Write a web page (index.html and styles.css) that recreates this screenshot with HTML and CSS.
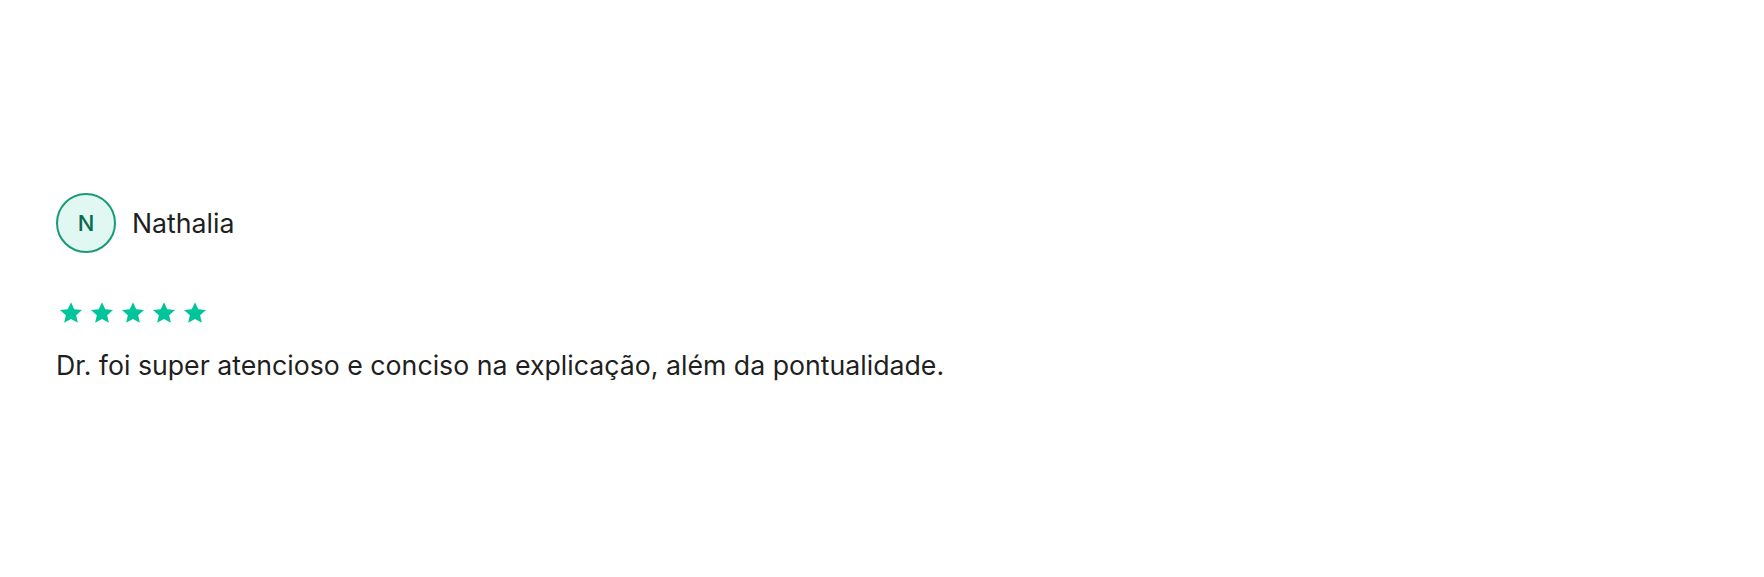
FILE: index.html
```html
<!DOCTYPE html>
<html lang="pt-BR">
<head>
<meta charset="UTF-8">
<meta name="viewport" content="width=device-width, initial-scale=1.0">
<title>Avaliação</title>
<link rel="stylesheet" href="styles.css">
</head>
<body>
<div class="review">
    <div class="review-header">
        <div class="avatar">N</div>
        <span class="name">Nathalia</span>
    </div>
    <div class="stars">
        <svg class="star" viewBox="2.2 2.5 19.6 18.4"><path d="M12 2.5l2.9 6.3 6.9.7-5.2 4.6 1.5 6.8L12 17.4l-6.1 3.5 1.5-6.8-5.2-4.6 6.9-.7z"/></svg>
        <svg class="star" viewBox="2.2 2.5 19.6 18.4"><path d="M12 2.5l2.9 6.3 6.9.7-5.2 4.6 1.5 6.8L12 17.4l-6.1 3.5 1.5-6.8-5.2-4.6 6.9-.7z"/></svg>
        <svg class="star" viewBox="2.2 2.5 19.6 18.4"><path d="M12 2.5l2.9 6.3 6.9.7-5.2 4.6 1.5 6.8L12 17.4l-6.1 3.5 1.5-6.8-5.2-4.6 6.9-.7z"/></svg>
        <svg class="star" viewBox="2.2 2.5 19.6 18.4"><path d="M12 2.5l2.9 6.3 6.9.7-5.2 4.6 1.5 6.8L12 17.4l-6.1 3.5 1.5-6.8-5.2-4.6 6.9-.7z"/></svg>
        <svg class="star" viewBox="2.2 2.5 19.6 18.4"><path d="M12 2.5l2.9 6.3 6.9.7-5.2 4.6 1.5 6.8L12 17.4l-6.1 3.5 1.5-6.8-5.2-4.6 6.9-.7z"/></svg>
    </div>
    <p class="comment">Dr. foi super atencioso e conciso na explicação, além da pontualidade.</p>
</div>
</body>
</html>
```

FILE: styles.css
```css
body {
    margin: 0;
    background-color: #fff;
    font-family: Inter, "Noto Sans", sans-serif;
    color: #1f1f1f;
}

.review {
    padding: 193px 56px 0;
}

.review-header {
    display: flex;
    align-items: center;
    gap: 16px;
}

.avatar {
    box-sizing: border-box;
    width: 60px;
    height: 60px;
    border: 2px solid #179b77;
    border-radius: 50%;
    background-color: #e1f8f2;
    color: #0b6b4f;
    font-size: 22px;
    font-weight: 500;
    display: flex;
    justify-content: center;
    align-items: center;
}

.name {
    font-size: 26.7px;
}

.stars {
    display: flex;
    gap: 9px;
    margin-top: 49px;
    padding-left: 4px;
}

.star {
    width: 22px;
    height: 21px;
    fill: #00c49a;
}

.comment {
    margin: 26px 0 0;
    font-size: 26.7px;
}
```
